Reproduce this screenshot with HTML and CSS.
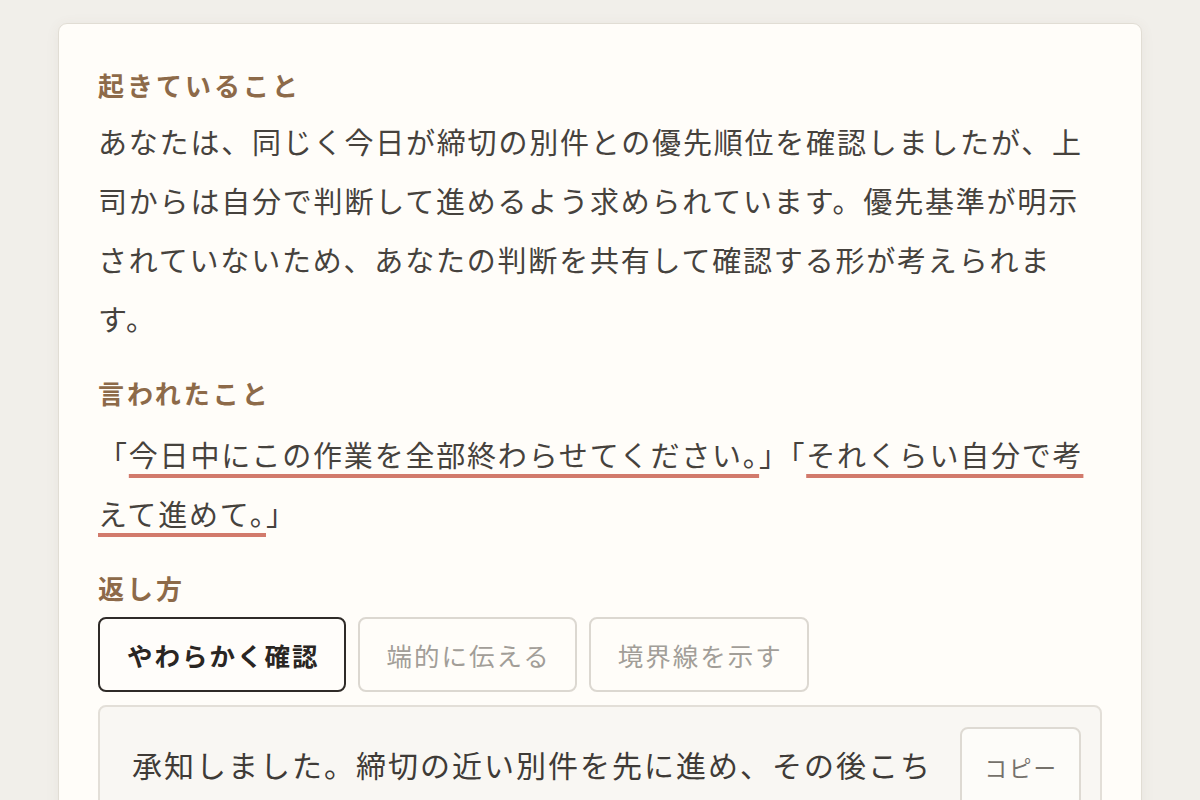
FILE: index.html
```html
<!DOCTYPE html>
<html lang="ja">
<head>
<meta charset="utf-8">
<title>返し方</title>
<link rel="stylesheet" href="styles.css">
</head>
<body>
<main class="page">
  <section class="card">
    <h2 class="label">起きていること</h2>
    <p class="body-text">あなたは、同じく今日が締切の別件との優先順位を確認しましたが、上司からは自分で判断して進めるよう求められています。優先基準が明示されていないため、あなたの判断を共有して確認する形が考えられます。</p>

    <h2 class="label label-gap">言われたこと</h2>
    <p class="quote">「<span class="mark">今日中にこの作業を全部終わらせてください。</span>」「<span class="mark">それくらい自分で考えて進めて。</span>」</p>

    <h2 class="label label-gap">返し方</h2>
    <div class="tabs">
      <button class="tab tab-active">やわらかく確認</button>
      <button class="tab">端的に伝える</button>
      <button class="tab">境界線を示す</button>
    </div>

    <div class="reply">
      <p class="reply-text">承知しました。締切の近い別件を先に進め、その後こちらの作業に取りかかる形でよろしいでしょうか。</p>
      <button class="copy">コピー</button>
    </div>
  </section>
</main>
</body>
</html>
```

FILE: styles.css
```css
html, body {
  margin: 0;
  padding: 0;
  background: #f1efea;
  height: 100%;
  overflow: hidden;
}

body {
  font-family: "Noto Sans CJK JP", "Noto Sans", sans-serif;
  color: #46423d;
}

.page {
  padding: 23px 58px 0 58px;
}

.card {
  background: #fffdf9;
  border: 1px solid #e1ddd4;
  border-radius: 9px;
  box-shadow: 0 2px 14px rgba(120, 90, 70, 0.07);
  padding: 43px 39px 40px 39px;
  min-height: 900px;
}

.label {
  margin: 0;
  font-size: 26px;
  font-weight: 700;
  line-height: 36px;
  letter-spacing: 3px;
  color: #8d6a49;
}

.label-gap {
  margin-top: 27px;
}

.body-text {
  margin: 9px 0 0 0;
  font-size: 29px;
  line-height: 59px;
  letter-spacing: 1.8px;
  color: #46423d;
}

.quote {
  margin: 14px 0 0 0;
  font-size: 29px;
  line-height: 59px;
  letter-spacing: 1.8px;
  color: #46423d;
}

.mark {
  text-decoration: underline;
  text-decoration-color: #d27a6c;
  text-decoration-thickness: 4px;
  text-underline-offset: 7px;
}

.tabs {
  display: flex;
  gap: 12px;
  margin-top: 11px;
}

.tab {
  font-family: "Noto Sans CJK JP", "Noto Sans", sans-serif;
  font-size: 25.5px;
  line-height: 37px;
  letter-spacing: 2px;
  padding: 17px 24px 17px 27px;
  border: 2px solid #dcd8d1;
  border-radius: 8px;
  background: #fffdf9;
  color: #a29e98;
  font-weight: 400;
}

.tab-active {
  border-color: #2f2b28;
  color: #2a2623;
  font-weight: 700;
  background: #fffdfa;
}

.reply {
  margin-top: 13px;
  display: flex;
  align-items: flex-start;
  gap: 28px;
  background: #f9f7f3;
  border: 2px solid #e3dfd8;
  border-radius: 8px;
  padding: 20px 19px 20px 32px;
}

.reply-text {
  flex: 1;
  margin: 0;
  padding-top: 6px;
  font-size: 30px;
  line-height: 63px;
  letter-spacing: 2px;
  color: #3f3b37;
}

.copy {
  flex: none;
  font-family: "Noto Sans CJK JP", "Noto Sans", sans-serif;
  font-size: 22.5px;
  line-height: 36px;
  letter-spacing: 2px;
  padding: 20px 21px 20px 22px;
  border: 2px solid #dedad3;
  border-radius: 8px;
  background: #fdfcf9;
  color: #75716b;
}
```
